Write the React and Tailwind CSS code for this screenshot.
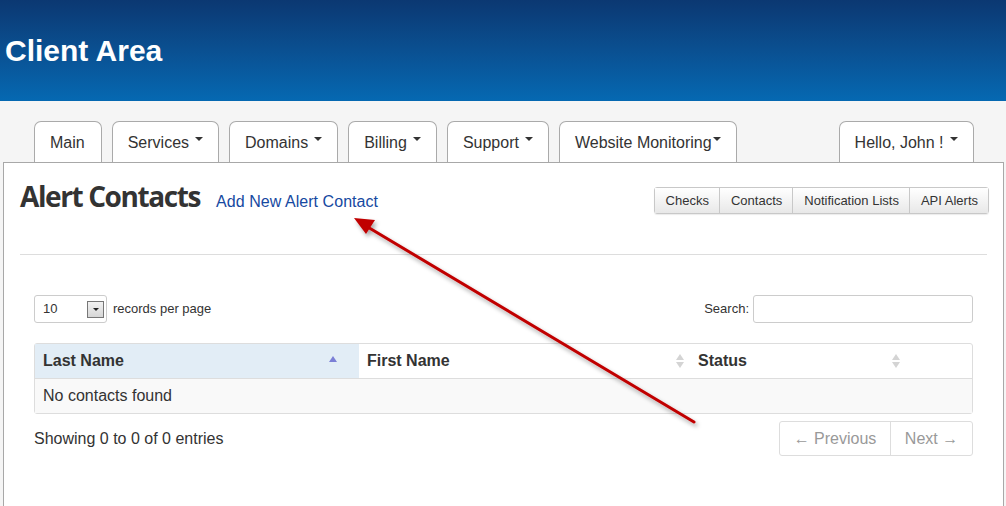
import React from "react";

const font = { fontFamily: '"Liberation Sans", Arial, sans-serif' };

function Caret() {
  return (
    <span className="inline-block w-0 h-0 ml-[6px] align-top mt-[3px] border-l-[4px] border-r-[4px] border-t-[4px] border-l-transparent border-r-transparent border-t-[#333]" />
  );
}

function Tab({ label, caret, tight }) {
  return (
    <div className="h-[41px] px-[15px] pt-[1px] flex items-center bg-white border border-b-0 border-[#aaa] rounded-t-[7px] text-[16px] text-[#333]">
      <span>{label}</span>
      {caret && (
        <span className={tight ? "self-start mt-[11px] ml-[-5px]" : "self-start mt-[11px]"}>
          <Caret />
        </span>
      )}
    </div>
  );
}

function SortIcon({ active }) {
  if (active) {
    return (
      <svg width="10" height="8" viewBox="0 0 10 8">
        <path d="M1 7 L5 1 L9 7 Z" fill="#7b7fd6" />
      </svg>
    );
  }
  return (
    <svg width="10" height="16" viewBox="0 0 10 16">
      <path d="M1 7 L5 1 L9 7 Z" fill="#d4d4d4" />
      <path d="M1 9 L5 15 L9 9 Z" fill="#d4d4d4" />
    </svg>
  );
}

export default function App() {
  return (
    <div className="relative w-[1006px] h-[506px] overflow-hidden bg-[#f5f5f5]" style={font}>
      <div className="h-[101px] bg-gradient-to-b from-[#0b3872] to-[#0569b2] pl-[5px] pt-[34px]">
        <h1 className="text-white font-bold text-[30px] leading-[34px]">Client Area</h1>
      </div>

      <div className="pt-[20px] flex items-end">
        <div className="flex gap-[10px] ml-[34px]">
          <div className="flex gap-[10px] [&>div:first-child]:pr-[16px]">
            <Tab label="Main" />
          </div>
          <Tab label="Services" caret />
          <Tab label="Domains" caret />
          <Tab label="Billing" caret />
          <Tab label="Support" caret />
          <Tab label="Website Monitoring" caret tight />
        </div>
        <div className="ml-[102px]">
          <Tab label="Hello, John !" caret />
        </div>
      </div>

      <div className="ml-[3px] w-[1001px] h-[400px] bg-white border border-[#a8a8a8] px-[16px]">
        <div className="flex items-start justify-between pt-[15px]">
          <div className="flex items-baseline">
            <h2
              className="text-[28px] font-bold text-[#333] tracking-[-1.4px] leading-[36px]"
              style={{ fontFamily: '"Open Sans", sans-serif' }}
            >
              Alert Contacts
            </h2>
            <a className="ml-[16px] text-[16px] text-[#1649a1] tracking-[0.05px]">Add New Alert Contact</a>
          </div>
          <div className="flex mt-[9px] mr-[-2px] border border-[#c8c8c8] rounded-[3px] text-[13px] text-[#333] shadow-[0_1px_1px_rgba(0,0,0,0.08)]">
            {["Checks", "Contacts", "Notification Lists", "API Alerts"].map((b, i) => (
              <div
                key={b}
                className={
                  "h-[25px] pl-[11px] pr-[10px] flex items-center bg-gradient-to-b from-white to-[#e8e8e8]" +
                  (i > 0 ? " border-l border-[#c8c8c8]" : "")
                }
              >
                {b}
              </div>
            ))}
          </div>
        </div>

        <div className="mt-[40px] border-t border-[#ddd]" />

        <div className="px-[14px] pt-[40px]">
          <div className="flex items-center justify-between">
            <div className="flex items-center">
              <div className="w-[73px] h-[28px] border border-[#ccc] rounded-[3px] flex items-center justify-between pl-[8px] pr-[2px] text-[13px] text-[#333]">
                <span>10</span>
                <div className="w-[17px] h-[17px] border border-[#777] bg-gradient-to-b from-[#f2f2f2] to-[#d6d6d6] flex items-center justify-center">
                  <span className="w-0 h-0 border-l-[3px] border-r-[3px] border-t-[3px] border-l-transparent border-r-transparent border-t-[#222]" />
                </div>
              </div>
              <span className="ml-[6px] text-[13px] text-[#333]">records per page</span>
            </div>
            <div className="flex items-center">
              <span className="text-[13px] text-[#333] mr-[4px]">Search:</span>
              <div className="w-[220px] h-[28px] border border-[#ccc] rounded-[3px] bg-white" />
            </div>
          </div>

          <div className="mt-[20px] border border-[#ddd] rounded-[3px] text-[16px] text-[#333]">
            <div className="flex h-[35px] border-b border-[#ddd] font-bold">
              <div className="w-[324px] bg-[#e2edf6] flex items-center justify-between pl-[8px] pr-[21px]">
                <span>Last Name</span>
                <span className="mt-[-5px]"><SortIcon active /></span>
              </div>
              <div className="w-[330px] flex items-center justify-between pl-[8px] pr-[4px]">
                <span>First Name</span>
                <SortIcon />
              </div>
              <div className="w-[216px] flex items-center justify-between pl-[9px] pr-[4px]">
                <span>Status</span>
                <SortIcon />
              </div>
            </div>
            <div className="h-[34px] bg-[#f9f9f9] flex items-center pl-[8px]">No contacts found</div>
          </div>

          <div className="flex items-start justify-between mt-[7px]">
            <span className="text-[16px] text-[#333] mt-[6px]">Showing 0 to 0 of 0 entries</span>
            <div className="flex h-[35px] border border-[#ddd] rounded-[3px] text-[16px] text-[#999]">
              <div className="w-[111px] flex items-center justify-center border-r border-[#ddd]">← Previous</div>
              <div className="w-[81px] flex items-center justify-center">Next →</div>
            </div>
          </div>
        </div>
      </div>

      <svg className="absolute left-0 top-0 pointer-events-none" width="1006" height="506">
        <defs>
          <filter id="sh" x="-10%" y="-10%" width="130%" height="130%">
            <feDropShadow dx="2" dy="3" stdDeviation="2" floodColor="#000" floodOpacity="0.35" />
          </filter>
        </defs>
        <g filter="url(#sh)">
          <line x1="694" y1="422" x2="366" y2="226" stroke="#c00000" strokeWidth="3" strokeLinecap="round" />
          <path d="M354 218 L375 220 L366 234 Z" fill="#c00000" />
        </g>
      </svg>
    </div>
  );
}
